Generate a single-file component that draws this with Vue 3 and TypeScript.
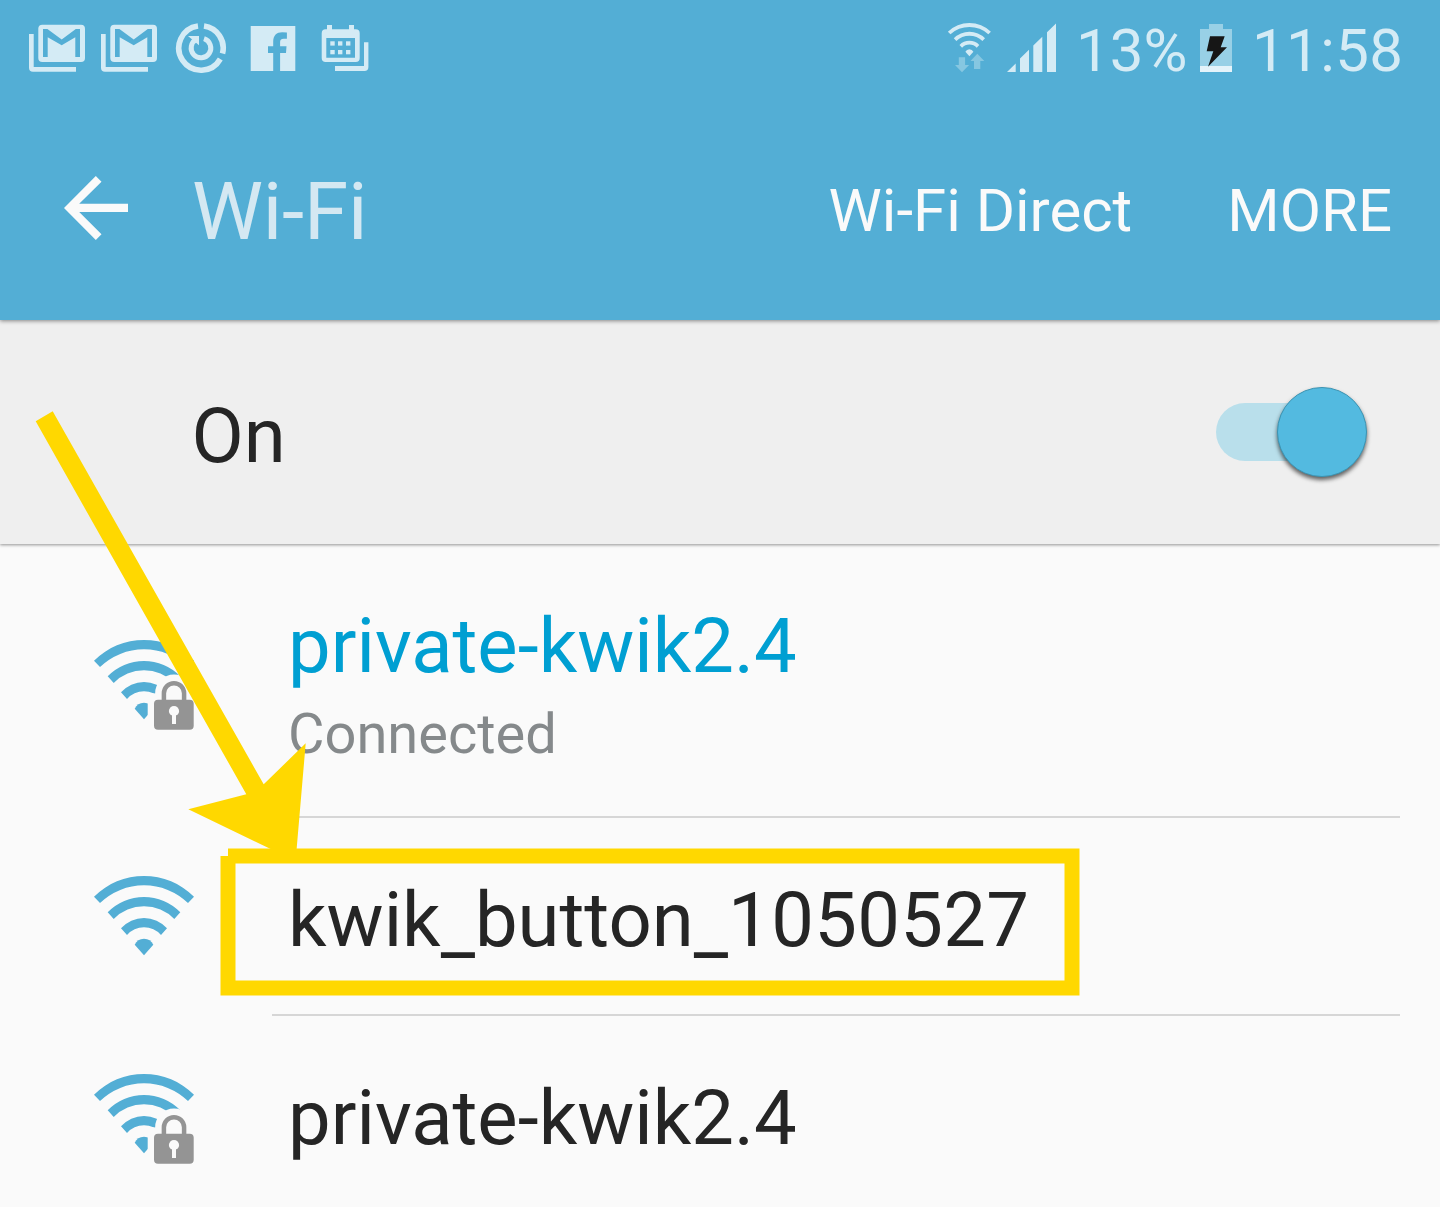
<script setup lang="ts">
interface Network {
  name: string
  status?: string
  locked: boolean
}

const networks: Network[] = [
  { name: 'private-kwik2.4', status: 'Connected', locked: true },
  { name: 'kwik_button_1050527', locked: false },
  { name: 'private-kwik2.4', locked: true },
]

// Underscores and long digit runs are set slightly differently from letters.
function parts(name: string): string[] {
  return name.split(/(_|\d{3,})/).filter(Boolean)
}

function partClass(part: string): string {
  if (part === '_') return 'low'
  return /^\d{3,}$/.test(part) ? 'digits' : ''
}

const arcs: string[] = [
  'M-50 20.7A70.7 70.7 0 0 1 50 20.7L44 27A63.5 63.5 0 0 0-44 27Z',
  'M-36.3 36.3A50.7 50.7 0 0 1 36.3 36.3L30.3 43A42.5 42.5 0 0 0-30.3 43Z',
  'M-23 52.3A30.8 30.8 0 0 1 23 52.3L17 59A22.6 22.6 0 0 0-17 59Z',
  'M-9.3 68.7A10.2 10.2 0 0 1 9.3 68.7L0 79.3Z',
]

const calendarDots: number[][] = [
  [9.3, 17.3], [17, 17.3], [25, 17.3],
  [9.3, 26], [17, 26], [25, 26],
]
</script>

<template>
  <div class="screen">
    <header class="top">
      <div class="status">
        <div class="notices">
          <svg v-for="n in 2" :key="n" class="mail" width="58" height="50" viewBox="28 23 58 50">
            <path class="tint" d="M29 34h4.7v33H76v4.7H33q-4 0-4-4Z" />
            <rect class="tint" x="38.3" y="24.7" width="46.7" height="37.3" rx="4" />
            <path class="cut" d="M43 57V29h4.4L61.7 39.6 75.8 29H80v28h-4.7V37.2L61.7 45.3 47.7 37.2V57Z" />
          </svg>
          <svg class="sync" width="52" height="52" viewBox="-26 -26 52 52" fill="none">
            <path class="line" stroke-width="5.6" d="M3 -22A22.2 22.2 0 0 1 21.5 5.5M19.3 11A22.2 22.2 0 1 1-3-22" />
            <path class="line" stroke-width="5" d="M3-9.3A9.8 9.8 0 1 1-4.5-8.7" />
            <path class="tint" d="M-13-12H-2V-2.7Z" />
          </svg>
          <svg class="social" width="46" height="46" viewBox="250 26 46 46">
            <rect class="tint" x="250.7" y="26" width="44.6" height="45" />
            <path class="cut" d="M273.2 71V53H268v-6.7h5.2v-4.6c0-6.5 3.5-9.5 9-9.5q3 0 4.7.4v6.1h-3.1c-3 0-3.7 1.2-3.7 3.6v4h6.4L286 53h-5.9v18Z" />
          </svg>
          <svg class="calendar" width="48" height="48" viewBox="0 0 48 48">
            <path class="tint" fill-rule="evenodd" d="M.7 9.3q0-4 4-4H6V1h5v4.3h17V1h5v4.3h1.7q4 0 4 4V34q0 4-4 4h-30q-4 0-4-4ZM5.3 14v19.7H34V14Z" />
            <rect v-for="(d, i) in calendarDots" :key="i" class="tint" :x="d[0]" :y="d[1]" width="4.4" height="4.3" />
            <path class="tint" d="M43 18.3h4.4V43q0 4-4 4H14v-5h29Z" />
          </svg>
        </div>
        <div class="system">
          <svg class="radio" width="46" height="52" viewBox="947 22 46 52">
            <g class="tint" transform="translate(969.4 23) scale(.43 .42)">
              <path v-for="a in arcs" :key="a" :d="a" />
            </g>
            <path class="faint" d="M958.8 57.3h6.3V65h4L962 72.3 955 65h3.8ZM974 69h6.3v-8h4l-7-7.3-6.8 7.3h3.5Z" />
          </svg>
          <svg class="signal" width="50" height="50" viewBox="1007 23 50 50">
            <path class="tint" d="M1007 72l8.7-8.5V72ZM1020 72V58.5l9-8.8V72ZM1033.3 72V45.4l9-8.7V72ZM1047 72V32.3l9-8.7V72Z" />
          </svg>
          <span class="percent">13%</span>
          <svg class="battery" width="32" height="48" viewBox="1200 24 32 48">
            <path fill="#98d0e6" d="M1200 29h9v-5h14v5h9v37h-32Z" />
            <path fill="#e4f3fa" d="M1200 66h32v6h-32Z" />
            <path fill="#161616" d="M1210 36.3h14.7l-4 11h6.3l-19 19.4 5.3-15.4h-6.6Z" />
          </svg>
          <span class="time">11:58</span>
        </div>
      </div>
      <div class="bar">
        <svg class="back" width="64" height="64" viewBox="0 0 64 64">
          <path fill="#fafafa" d="M0 32 31.8 0l5.7 5.7L15.2 27.8H64v8.3H15.2l22.3 22.2-5.7 5.7Z" />
        </svg>
        <h1>Wi-Fi</h1>
        <nav>
          <span>Wi-Fi Direct</span>
          <span class="more">MORE</span>
        </nav>
      </div>
    </header>

    <section class="power">
      <span>On</span>
      <div class="toggle"><i></i></div>
    </section>

    <ul>
      <li v-for="(net, i) in networks" :key="i" :class="{ active: net.status }">
        <svg class="wifi" width="104" height="94" viewBox="-52 -1 104 94">
          <g fill="#53aed5">
            <path v-for="a in arcs" :key="a" :d="a" />
          </g>
          <template v-if="net.locked">
            <g fill="#fafafa" stroke="#fafafa">
              <path stroke-width="17.5" d="M19.9 61V53.3a10.1 10.1 0 0 1 20.2 0V61" />
              <rect x="10" y="59.7" width="39.7" height="30" stroke-width="12.6" />
            </g>
            <path fill="none" stroke="#949494" stroke-width="4.5" d="M19.9 61V53.3a10.1 10.1 0 0 1 20.2 0V61" />
            <rect x="10" y="59.7" width="39.7" height="30" rx="4" fill="#949494" />
            <circle cx="30" cy="71" r="5.1" fill="#fafafa" />
            <path fill="#fafafa" d="M28 74h4v10h-4Z" />
          </template>
        </svg>
        <div class="label">
          <strong><span v-for="(p, k) in parts(net.name)" :key="k" :class="partClass(p)">{{ p }}</span></strong>
          <small v-if="net.status">{{ net.status }}</small>
        </div>
      </li>
    </ul>

    <svg class="callout" width="1440" height="1207" viewBox="0 0 1440 1207">
      <path fill="#ffd800" d="M35.7 421.3 52.7 411.3 263.7 784.3 305.7 743.3 295.6 861 188.3 809.3 246.3 794.3Z" />
      <path fill="none" stroke="#ffd800" stroke-width="15" d="M228 856H1072V988H228V856" />
    </svg>
  </div>
</template>

<style>
body {
  margin: 0;
}
</style>

<style scoped>
.screen {
  position: relative;
  width: 1440px;
  height: 1207px;
  overflow: hidden;
  background: #fafafa;
  color: #252525;
  font-family: Roboto, "Liberation Sans", sans-serif;
}
svg {
  display: block;
  flex: none;
}
.top {
  position: relative;
  z-index: 2;
  height: 320px;
  background: #53aed5;
  box-shadow: 0 1px 4px rgba(0, 0, 0, .45);
}
.status {
  display: flex;
  justify-content: space-between;
  height: 101px;
  color: #d4ebf5;
  font-size: 60px;
  line-height: 101px;
}
.notices,
.system {
  display: flex;
  align-items: flex-start;
}
.notices {
  padding-left: 28px;
}
.mail {
  margin: 23px 14px 0 0;
}
.sync {
  margin: 22px 23px 0 3px;
}
.social {
  margin: 26px 25px 0 0;
}
.calendar {
  margin-top: 24px;
}
.radio {
  margin: 22px 14px 0 0;
}
.signal {
  margin: 23px 19px 0 0;
}
.percent {
  width: 124px;
}
.battery {
  margin: 24px 20px 0 0;
}
.time {
  width: 188px;
  letter-spacing: .4px;
}
.tint {
  fill: #d4ebf5;
}
.line {
  stroke: #d4ebf5;
}
.cut {
  fill: #53aed5;
}
.faint {
  fill: #86c7e1;
}
.bar {
  display: flex;
  align-items: center;
  height: 219px;
}
.back {
  margin: -5px 64px 0 64px;
}
h1 {
  margin: 2px 0 0;
  color: #d4e8f2;
  font-size: 80px;
  font-weight: 400;
  letter-spacing: -.2px;
}
nav {
  display: flex;
  margin-left: auto;
  padding-right: 48px;
  color: #fafafa;
  font-size: 60px;
}
.more {
  margin-left: 95px;
}
.power {
  position: relative;
  z-index: 1;
  display: flex;
  align-items: center;
  justify-content: space-between;
  height: 224px;
  padding: 0 73px 0 191.5px;
  background: #efefef;
  box-shadow: 0 1px 3px rgba(0, 0, 0, .42);
  font-size: 76px;
}
.power span {
  margin-top: 8px;
}
.toggle {
  display: flex;
  align-items: center;
  justify-content: flex-end;
  width: 151px;
  height: 58px;
  border-radius: 29px;
  background: linear-gradient(90deg, #b9dfeb 110px, transparent 110px);
}
.toggle i {
  box-sizing: border-box;
  width: 90px;
  height: 90px;
  border: 1px solid #3b94b3;
  border-radius: 50%;
  background: #53bae0;
  box-shadow: 0 3px 4px rgba(0, 0, 0, .6);
}
ul {
  margin: 0;
  padding: 0;
  list-style: none;
}
li {
  display: flex;
  height: 198px;
}
li.active {
  height: 274px;
}
.wifi {
  margin: 57px 76px 0 92px;
}
.active .wifi {
  margin-top: 95px;
}
.label {
  display: flex;
  flex-direction: column;
  width: 1128px;
  box-sizing: border-box;
  padding: 57px 0 0 16px;
  border-bottom: 2px solid #d6d6d6;
}
strong {
  font-size: 76px;
  font-weight: 400;
  line-height: 90px;
}
.active strong {
  color: #009fd2;
}
.low {
  line-height: 0;
  vertical-align: -6px;
}
.digits {
  letter-spacing: .33px;
}
small {
  color: #85898b;
  font-size: 56px;
  line-height: 86px;
}
.callout {
  position: absolute;
  z-index: 3;
  top: 0;
  left: 0;
}
</style>
